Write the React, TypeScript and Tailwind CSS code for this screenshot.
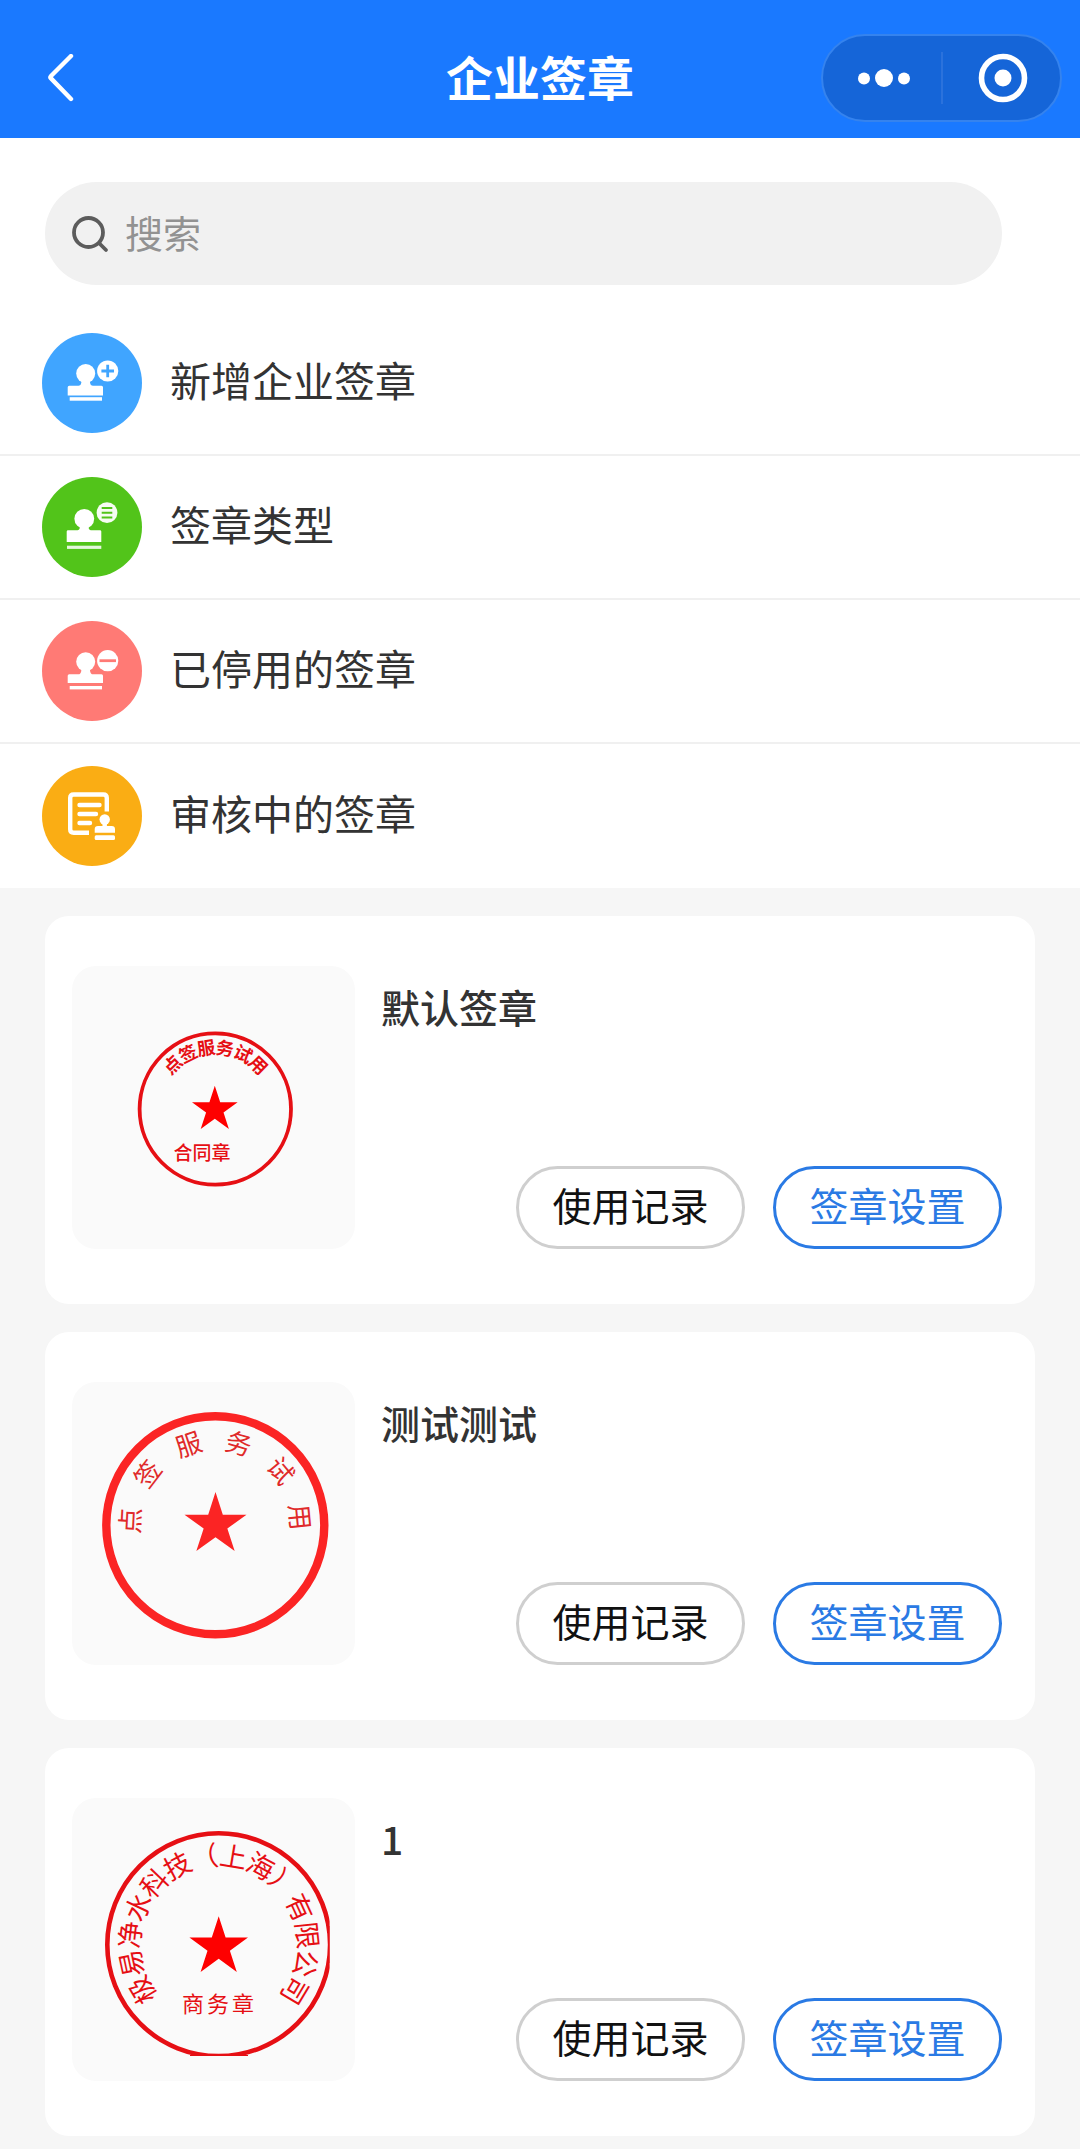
import type { ReactNode } from "react";

type Glyph = { char: string; angle: number };

const RED = "#e60f14";

// Five-pointed star centred on cx, cy
function Star({ cx, cy, r, fill }: { cx: number; cy: number; r: number; fill: string }) {
  const points = Array.from({ length: 10 }, (_, i) => {
    const radius = i % 2 === 0 ? r : r * 0.382;
    const a = (Math.PI / 5) * i;
    return `${(cx + radius * Math.sin(a)).toFixed(2)},${(cy - radius * Math.cos(a)).toFixed(2)}`;
  }).join(" ");
  return <polygon points={points} fill={fill} />;
}

// Characters set round a circle, each turned to face the centre
function RingText({ glyphs, cx, cy, r, size, fill, weight }: {
  glyphs: Glyph[];
  cx: number;
  cy: number;
  r: number;
  size: number;
  fill: string;
  weight: number;
}) {
  return (
    <g fill={fill} fontSize={size} fontWeight={weight} textAnchor="middle">
      {glyphs.map(({ char, angle }) => (
        <text key={angle} x={cx} y={cy - r + size * 0.37} transform={`rotate(${angle} ${cx} ${cy})`}>
          {char}
        </text>
      ))}
    </g>
  );
}

function spread(text: string, from: number, step: number): Glyph[] {
  return [...text].map((char, i) => ({ char, angle: from + step * i }));
}

function ContractSeal() {
  return (
    <svg viewBox="0 0 283 283" className="size-full">
      <circle cx="143.3" cy="143" r="75.7" fill="none" stroke={RED} strokeWidth="3.8" />
      <RingText glyphs={spread("点签服务试用", -44, 17.7)} cx={143.3} cy={143} r={61.5} size={18} fill={RED} weight={700} />
      <Star cx={142.8} cy={143.7} r={24} fill="#fe0000" />
      <text x="130" y="194" fontSize="19" fontWeight="500" fill={RED} textAnchor="middle">合同章</text>
    </svg>
  );
}

function TestSeal() {
  return (
    <svg viewBox="0 0 283 283" className="size-full">
      <circle cx="143.3" cy="143.3" r="109" fill="none" stroke="#fb2424" strokeWidth="8.4" />
      <RingText glyphs={spread("点签服务试用", -87, 34.3)} cx={143.3} cy={143.3} r={85} size={26} fill="#e02a2a" weight={400} />
      <Star cx={143.5} cy={142.7} r={32.6} fill="#fb2424" />
    </svg>
  );
}

function BusinessSeal() {
  return (
    <svg viewBox="0 0 283 283" className="size-full">
      <clipPath id="seal-edge">
        <rect x="0" y="0" width="257.6" height="258" />
      </clipPath>
      <g clipPath="url(#seal-edge)" fill="none" stroke={RED}>
        <circle cx="146.7" cy="146.7" r="111.4" strokeWidth="4.6" />
        <path d="M257.2 128v37M118 257.6h58" strokeWidth="1.2" />
      </g>
      <RingText glyphs={spread("极易净水科技（上海）有限公司", -120.7, 18.6)} cx={146.7} cy={146.7} r={89} size={27} fill={RED} weight={400} />
      <Star cx={146.7} cy={149} r={30.8} fill="#fe0000" />
      <g fontSize="22" fill={RED} textAnchor="middle">
        <text x="121" y="214">商</text>
        <text x="146" y="214">务</text>
        <text x="171" y="214">章</text>
      </g>
    </svg>
  );
}

function AddIcon() {
  return (
    <svg viewBox="0 0 100 100" className="size-full">
      <circle cx="50" cy="50" r="50" fill="#40a5ff" />
      <g fill="#fff">
        <circle cx="43.7" cy="40.5" r="9.5" />
        <path d="M39.500 47h8.400c0 3 .4 5.700 3 5.700h8.600q1.500 0 1.500 1.500v8.200H25.700v-8.200q0-1.500 1.500-1.500h9.300c2.600 0 3-2.700 3-5.700z" />
        <rect x="27.7" y="64.2" width="32.3" height="3.5" />
        <circle cx="65.7" cy="38" r="10.6" />
      </g>
      <path d="M59.400 38h12.600M65.700 31.700v12.600" stroke="#40a5ff" strokeWidth="2.8" />
    </svg>
  );
}

function TypeIcon() {
  return (
    <svg viewBox="0 0 100 100" className="size-full">
      <circle cx="50" cy="50" r="50" fill="#52c41a" />
      <g fill="#fff">
        <circle cx="42.3" cy="41.8" r="9.9" />
        <path d="M37.500 48h9.400c-1 3 0 5.300 3 5.300h8.100q1.300 0 1.300 1.300V65H24.700V54.600q0-1.300 1.300-1.300h8.500c3 0 4-2.300 3-5.300z" />
        <rect x="25" y="68.7" width="34.3" height="3.2" fillOpacity="0.85" />
        <circle cx="65" cy="35.7" r="10.4" fillOpacity="0.95" />
      </g>
      <path d="M59.700 31h10.600M59.700 35.800h10.600M59.700 40.600h10.600" stroke="#52c41a" strokeWidth="2" />
    </svg>
  );
}

function DisabledIcon() {
  return (
    <svg viewBox="0 0 100 100" className="size-full">
      <circle cx="50" cy="50" r="50" fill="#ff7a75" />
      <g fill="#fff">
        <circle cx="43.7" cy="40.7" r="9.5" />
        <path d="M39.500 47h8.400c0 3 .4 6.300 3 6.300h8.600q1.500 0 1.500 1.500V62H25.700v-7.200q0-1.500 1.500-1.500h9.300c2.600 0 3-3.300 3-6.300z" />
        <rect x="27.7" y="65" width="32.3" height="3.4" />
        <circle cx="65.7" cy="39.7" r="10.6" />
      </g>
      <path d="M57.500 39.700H74" stroke="#ff7a75" strokeWidth="2.8" />
    </svg>
  );
}

function ReviewIcon() {
  return (
    <svg viewBox="0 0 100 100" className="size-full">
      <circle cx="50" cy="50" r="50" fill="#faad14" />
      <g fill="none" stroke="#fff" strokeWidth="4.4">
        <path d="M64.800 45.500V32q0-3.500-3.500-3.500H31.700q-3.500 0-3.500 3.500v31.300q0 3.500 3.500 3.500H47" />
        <path d="M37.500 39h20M37.500 48h16.500M37.500 57h10.500" strokeLinecap="round" />
      </g>
      <g fill="#fff">
        <circle cx="62.7" cy="53.5" r="5.2" />
        <path d="M60.500 56h4.400v4h4.800q3.300 0 3.300 3.300v3.400H52.700v-3.400q0-3.300 3.300-3.300h4.500z" />
        <rect x="52.7" y="69.3" width="20.3" height="4.6" rx="1.5" />
      </g>
    </svg>
  );
}

const menu: { label: string; icon: ReactNode }[] = [
  { label: "新增企业签章", icon: <AddIcon /> },
  { label: "签章类型", icon: <TypeIcon /> },
  { label: "已停用的签章", icon: <DisabledIcon /> },
  { label: "审核中的签章", icon: <ReviewIcon /> },
];

const seals: { name: string; image: ReactNode }[] = [
  { name: "默认签章", image: <ContractSeal /> },
  { name: "测试测试", image: <TestSeal /> },
  { name: "1", image: <BusinessSeal /> },
];

function Header() {
  return (
    <header className="relative flex h-[138px] items-center justify-between bg-[#1a79ff] pt-[18px] pr-[18px] pl-9 text-white">
      <button type="button" aria-label="返回" className="p-2">
        <svg viewBox="0 0 32 48" className="h-12 w-8" fill="none" stroke="currentColor" strokeWidth="4.4" strokeLinecap="round" strokeLinejoin="round">
          <path d="M27 2 7 22q-1.200 1.200 0 2.400L27 45" />
        </svg>
      </button>
      <h1 className="absolute inset-x-0 pb-1 text-center text-[47px] leading-[64px] font-bold">企业签章</h1>
      <div className="relative flex h-[88px] w-[241px] items-center rounded-full border-2 border-[#3583ee] bg-[#1565d8]">
        <button type="button" aria-label="更多" className="flex h-full flex-1 items-center justify-center pl-1">
          <svg viewBox="0 0 54 20" className="h-5 w-[54px]" fill="currentColor">
            <circle cx="7" cy="10.5" r="6" />
            <circle cx="27" cy="10" r="9" />
            <circle cx="47" cy="10.5" r="6" />
          </svg>
        </button>
        <span className="h-[52px] w-[2px] bg-[#2b72dc]" />
        <button type="button" aria-label="关闭" className="flex h-full flex-1 items-center justify-center pl-1">
          <svg viewBox="0 0 50 50" className="size-[50px]">
            <circle cx="25" cy="25" r="21.5" fill="none" stroke="currentColor" strokeWidth="5.6" />
            <circle cx="25" cy="25" r="8.5" fill="currentColor" />
          </svg>
        </button>
      </div>
    </header>
  );
}

export default function App() {
  return (
    <div className="min-h-screen bg-[#f6f6f6] font-['Noto_Sans_CJK_SC',sans-serif] text-[#333333]">
      <Header />

      <section className="bg-white pt-11">
        <label className="mr-[78px] ml-[45px] flex h-[103px] items-center gap-3.5 rounded-full bg-[#f1f1f1] px-[26px]">
          <svg viewBox="0 0 40 40" className="size-10 shrink-0" fill="none" stroke="#5c5c5c" strokeWidth="3.8" strokeLinecap="round">
            <circle cx="17.5" cy="18.5" r="14.5" />
            <path d="m28.500 29.500 6.500 6.500" />
          </svg>
          <input
            type="text"
            aria-label="搜索"
            placeholder="搜索"
            className="min-w-0 flex-1 bg-transparent pb-1 text-[38px] leading-[56px] outline-none placeholder:text-[#929292]"
          />
        </label>

        {/* Menu */}
        <nav className="mt-[27px] divide-y-2 divide-[#f0f0f0]">
          {menu.map((item) => (
            <a key={item.label} href="#" className="flex h-36 items-center gap-7 px-[42px]">
              <span className="size-[100px] shrink-0">{item.icon}</span>
              <span className="pb-2 text-[41px] leading-[60px]">{item.label}</span>
            </a>
          ))}
        </nav>
      </section>

      {/* Seal cards */}
      <ul className="flex flex-col gap-7 px-[45px] pt-7 pb-[13px]">
        {seals.map((seal) => (
          <li key={seal.name} className="flex gap-[26px] rounded-3xl bg-white pt-[50px] pr-[33px] pb-[55px] pl-[27px]">
            <div className="size-[283px] shrink-0 overflow-hidden rounded-3xl bg-[#fafafa]">{seal.image}</div>
            <div className="flex flex-1 flex-col justify-between pt-3">
              <h2 className="text-[39px] leading-[56px] font-medium">{seal.name}</h2>
              <div className="flex justify-end gap-7">
                <button type="button" className="h-[83px] w-[229px] rounded-full border-3 border-[#cfcfcf] pb-2 text-[39px] leading-[56px] text-[#111111]">
                  使用记录
                </button>
                <button type="button" className="h-[83px] w-[229px] rounded-full border-3 border-[#2a7ae4] pb-2 text-[39px] leading-[56px] text-[#2a7ae4]">
                  签章设置
                </button>
              </div>
            </div>
          </li>
        ))}
      </ul>
    </div>
  );
}
